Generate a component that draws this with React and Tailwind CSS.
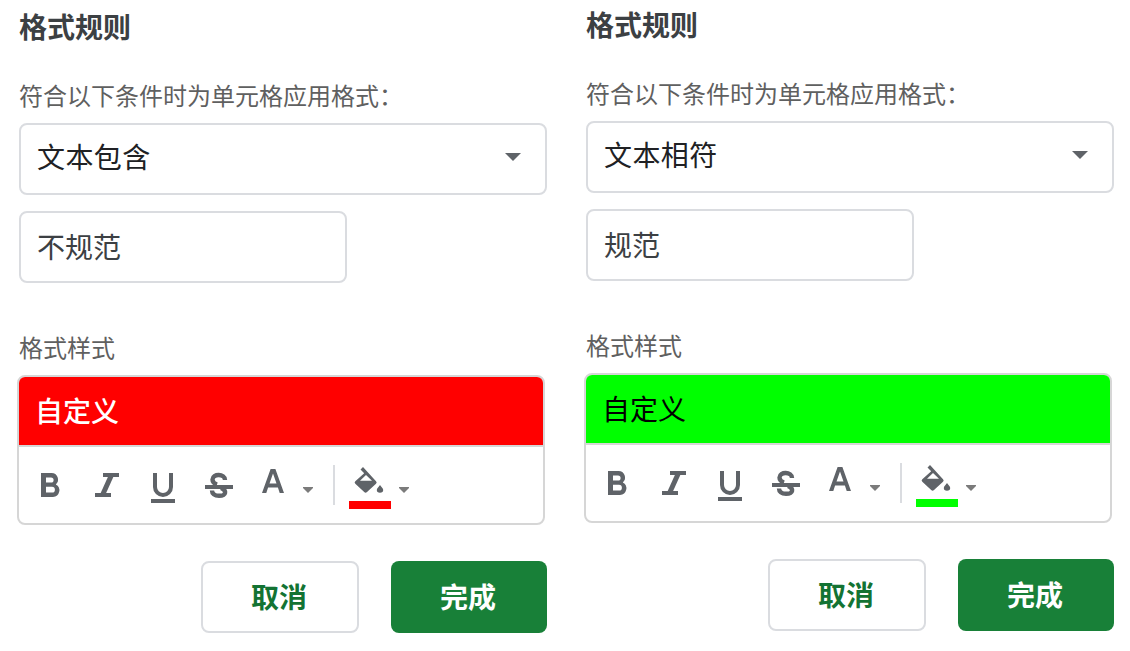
import React from "react";

const FONT = "font-['Noto_Sans_CJK_SC',sans-serif]";

function Caret() {
  return (
    <svg width="10" height="6" viewBox="0 0 10 6">
      <path d="M0 0H10V1L5 6L0 1Z" fill="#7b7b7b" />
    </svg>
  );
}

function BoldIcon() {
  return (
    <svg width="36" height="36" viewBox="0 0 36 36" fill="#5f6368">
      <path
        fillRule="evenodd"
        d="M8 6H18.600A6.500 6.500 0 0 1 22.800 17.400A6.700 6.700 0 0 1 20 30H8ZM13 10.400V15.600H18a2.600 2.600 0 0 0 0-5.200ZM13 19.800V25.600H19a2.900 2.900 0 0 0 0-5.800Z"
      />
    </svg>
  );
}

function ItalicIcon() {
  return (
    <svg width="36" height="36" viewBox="0 0 36 36" fill="none" stroke="#5f6368" strokeWidth="4">
      <path d="M14 8H30M6 28H22" />
      <path d="M22.500 8L13.500 28" strokeWidth="5" />
    </svg>
  );
}

function UnderlineIcon() {
  return (
    <svg width="36" height="36" viewBox="0 0 36 36" fill="none" stroke="#5f6368" strokeWidth="4">
      <path d="M10 6V20a8 8 0 0 0 16 0V6M6 34H30" />
    </svg>
  );
}

function StrikeIcon() {
  return (
    <svg width="36" height="36" viewBox="0 0 36 36" fill="none" stroke="#5f6368" strokeWidth="4.400">
      <path d="M24 13C24 6.500 11.500 6.500 11.500 12.500C11.500 15 13 16.500 16 17.500M20 21C26 23.500 25.500 28.800 18 28.800C13.500 28.800 11 26.500 11 23.500" />
      <path d="M4 20H32" strokeWidth="4" />
    </svg>
  );
}

function TextColorIcon() {
  return (
    <svg width="36" height="36" viewBox="0 0 36 36" fill="#5f6368">
      <path fillRule="evenodd" d="M15.600 2H20.400L29 26H24.700L22.900 20.500H13.100L11.300 26H7ZM14.500 16.500H21.500L18 6.500Z" />
    </svg>
  );
}

function FillIcon() {
  return (
    <svg width="42" height="34" viewBox="0 0 42 34" fill="#5f6368">
      <path
        fillRule="evenodd"
        d="M14 0L11.500 2.500L15.200 6.200L6.300 14.200a1.800 1.800 0 0 0 0 2.600L15.200 25a2 2 0 0 0 2.800 0L27 16.800a1.800 1.800 0 0 0 0-2.600ZM17 8L23 13.800H11Z"
      />
      <path d="M31 18C29.500 20 27.800 21.500 27.800 23a3.200 2.700 0 0 0 6.400 0C34.200 21.500 32.500 20 31 18Z" />
    </svg>
  );
}

function RulePanel({ condition, value, preview, bar }) {
  return (
    <section className="flex w-[530px] flex-col items-start">
      <h2 className="ml-[2px] h-10 text-[28px] leading-10 font-bold text-[#3c4043]">格式规则</h2>
      <p className="mt-[33px] ml-[2px] h-8 text-[24px] leading-8 text-[#5f6060] whitespace-nowrap">符合以下条件时为单元格应用格式：</p>
      <div className="mt-3 ml-[2px] flex h-[72px] w-[528px] items-center justify-between rounded-lg border-2 border-[#dadce0] pr-6 pb-1 pl-4">
        <span className="text-[28px] leading-10 tracking-[0.4px] text-[#202124] -mt-[2px]">{condition}</span>
        <svg width="16" height="8" viewBox="0 0 16 8">
          <path d="M0 0H16L8 8Z" fill="#5f6368" />
        </svg>
      </div>
      <div className="mt-4 ml-[2px] flex h-[72px] w-[328px] items-center rounded-lg border-2 border-[#dadce0] pb-[2px] pl-4">
        <span className="text-[28px] leading-10 text-[#3c4043]">{value}</span>
      </div>
      <p className="mt-12 ml-[2px] h-8 text-[24px] leading-8 text-[#5f6060]">格式样式</p>
      <div className="mt-3 h-[150px] w-[528px] overflow-hidden rounded-lg border-2 border-[#d6d6d6]">
        <div className={`flex h-[70px] items-center border-b-2 border-[#d6d6d6] pb-[2px] pl-4 text-[28px] leading-10 ${preview}`}>自定义</div>
        <div className="flex h-[76px] items-start pt-5 pl-[14px]">
          <div className="flex gap-5">
            <BoldIcon />
            <ItalicIcon />
            <UnderlineIcon />
            <StrikeIcon />
          </div>
          <div className="ml-[18px] flex">
            <TextColorIcon />
            <div className="mt-5 ml-3"><Caret /></div>
          </div>
          <div className="-mt-[2px] ml-5 h-10 w-[2px] bg-[#dadce0]" />
          <div className="ml-[14px] flex flex-col">
            <FillIcon />
            <div className={`h-2 w-[42px] ${bar}`} />
          </div>
          <div className="mt-5 ml-2"><Caret /></div>
        </div>
      </div>
      <div className="mt-9 flex gap-8 self-end text-[28px] leading-10 font-bold">
        <button className="h-[72px] w-[158px] rounded-lg border-2 border-[#dadce0] pr-[2px] pb-[2px] text-[#137333]">取消</button>
        <button className="h-[72px] w-[156px] rounded-lg bg-[#188038] pr-[2px] pb-[2px] text-white">完成</button>
      </div>
    </section>
  );
}

export default function App() {
  return (
    <main className={`flex h-[651px] w-[1130px] items-start gap-[37px] overflow-hidden bg-white pl-[17px] ${FONT}`}>
      <div className="pt-[6px]">
        <RulePanel condition="文本包含" value="不规范" preview="bg-[#ff0000] text-white font-medium" bar="bg-[#ff0000]" />
      </div>
      <div className="pt-1">
        <RulePanel condition="文本相符" value="规范" preview="bg-[#00ff00] text-black" bar="bg-[#00ff00]" />
      </div>
    </main>
  );
}
